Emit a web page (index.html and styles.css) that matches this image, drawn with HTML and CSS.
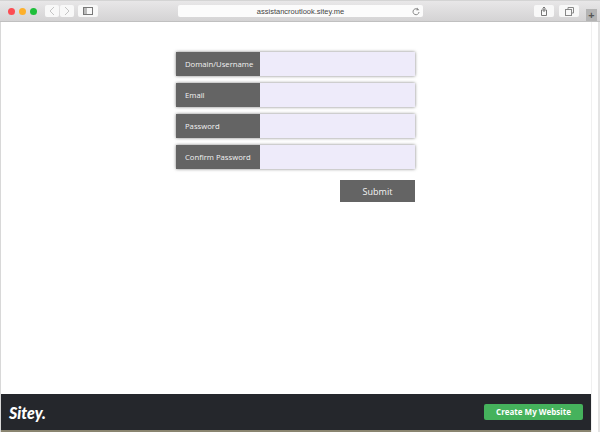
FILE: index.html
```html
<!DOCTYPE html>
<html lang="en">
<head>
    <meta charset="UTF-8">
    <meta name="viewport" content="width=device-width, initial-scale=1.0">
    <title>assistancroutlook.sitey.me</title>
    <link rel="stylesheet" href="styles.css">
</head>
<body>
    <div class="window">
        <div class="toolbar">
            <div class="lights">
                <span class="light red"></span>
                <span class="light yellow"></span>
                <span class="light green"></span>
            </div>
            <div class="nav-group">
                <span class="tool tool-nav">
                    <svg width="8" height="10" viewBox="0 0 8 10"><path d="M6 1 2 5l4 4" fill="none" stroke="#c4c4c4" stroke-width="1"/></svg>
                </span>
                <span class="tool tool-nav">
                    <svg width="8" height="10" viewBox="0 0 8 10"><path d="M2 1l4 4-4 4" fill="none" stroke="#c4c4c4" stroke-width="1"/></svg>
                </span>
            </div>
            <span class="tool tool-side">
                <svg width="10" height="8" viewBox="0 0 10 8"><rect x=".5" y=".5" width="9" height="7" fill="none" stroke="#777"/><rect x="1" y="1" width="3" height="6" fill="#bbb"/></svg>
            </span>
            <div class="address">
                <span class="url">assistancroutlook.sitey.me</span>
                <svg class="reload" width="8" height="9" viewBox="0 0 8 9"><path d="M6.600 3.200A3 3 0 1 0 7 5" fill="none" stroke="#888" stroke-width="1"/><path d="M5 .5l2 2.600-2.600.4z" fill="#888"/></svg>
            </div>
            <span class="tool tool-right">
                <svg width="8" height="10" viewBox="0 0 8 10"><path d="M1.500 4h5v5.500h-5z" fill="none" stroke="#777"/><path d="M4 6V1M2.500 2.500 4 1l1.500 1.500" fill="none" stroke="#777"/></svg>
            </span>
            <span class="tool tool-right">
                <svg width="9" height="9" viewBox="0 0 9 9"><path d="M3 2.500V.5h5.500V6H6.500" fill="none" stroke="#888"/><rect x=".5" y="2.500" width="6" height="6" fill="none" stroke="#888"/></svg>
            </span>
            <div class="new-tab">+</div>
        </div>

        <div class="viewport">
            <div class="main">
                <div class="content">
                    <form class="login-form">
                        <div class="form-group">
                            <label class="field-label" for="username">Domain/Username</label>
                            <input class="field-input" type="text" id="username">
                        </div>
                        <div class="form-group">
                            <label class="field-label" for="email">Email</label>
                            <input class="field-input" type="text" id="email">
                        </div>
                        <div class="form-group">
                            <label class="field-label" for="password">Password</label>
                            <input class="field-input" type="password" id="password">
                        </div>
                        <div class="form-group">
                            <label class="field-label" for="confirm">Confirm Password</label>
                            <input class="field-input" type="password" id="confirm">
                        </div>
                        <div class="form-actions">
                            <button class="submit" type="button">Submit</button>
                        </div>
                    </form>
                </div>
                <div class="footer">
                    <span class="logo">Sitey.</span>
                    <a class="create" href="#">Create My Website</a>
                </div>
                <div class="bottom-edge"></div>
            </div>
            <div class="scrollbar"></div>
        </div>
    </div>
</body>
</html>
```

FILE: styles.css
```css
html, body {
    margin: 0;
    padding: 0;
}
body {
    font-family: "Open Sans", Arial, sans-serif;
    background: #fff;
}
.window {
    width: 600px;
    height: 432px;
    display: flex;
    flex-direction: column;
    overflow: hidden;
}

/* browser chrome */
.toolbar {
    height: 22px;
    flex: none;
    display: flex;
    align-items: center;
    padding-left: 8px;
    background: linear-gradient(#e8e7e8, #d4d3d4);
    border-top: 1px solid #d4d4d4;
    border-bottom: 1px solid #c0c0c0;
    box-sizing: border-box;
}
.lights {
    display: flex;
    gap: 4px;
    margin-right: 8px;
}
.light {
    width: 7px;
    height: 7px;
    border-radius: 50%;
}
.red { background: #fc4c52; }
.yellow { background: #fdb02b; }
.green { background: #1ebf3a; }
.nav-group {
    display: flex;
    gap: 1px;
    margin-right: 4px;
}
.tool {
    height: 12px;
    background: #f8f8f8;
    border-radius: 2px;
    display: flex;
    align-items: center;
    justify-content: center;
}
.tool-nav { width: 14px; }
.tool-side {
    width: 20px;
    margin-right: 80px;
}
.address {
    width: 245px;
    height: 12px;
    background: #fbfbfb;
    border-radius: 2px;
    display: flex;
    align-items: center;
    justify-content: center;
    position: relative;
    margin-right: 111px;
}
.url {
    font-family: "Liberation Sans", Arial, sans-serif;
    font-size: 7.500px;
    color: #444;
}
.reload {
    position: absolute;
    right: 3px;
    top: 2px;
}
.tool-right {
    width: 20px;
    margin-right: 5px;
}
.new-tab {
    width: 11px;
    height: 12px;
    margin-left: 2px;
    background: #b4b4b4;
    color: #555;
    font-size: 11px;
    font-weight: bold;
    line-height: 12px;
    text-align: center;
    align-self: flex-end;
}

/* page */
.viewport {
    flex: 1;
    display: flex;
    min-height: 0;
}
.main {
    flex: 1;
    display: flex;
    flex-direction: column;
    min-width: 0;
    border-left: 1px solid #d8d8d8;
}
.content {
    flex: 1;
    padding: 30px 0 0 175px;
}
.scrollbar {
    width: 9px;
    flex: none;
    box-sizing: border-box;
    background: #fff;
    border-left: 1px solid #f0f0f0;
    border-right: 2px solid #e4e4e4;
}
.login-form {
    width: 239px;
}
.form-group {
    display: flex;
    height: 24px;
    margin-bottom: 7px;
    box-shadow: 0 0 3px rgba(0, 0, 0, 0.5);
}
.field-label {
    width: 84px;
    flex: none;
    box-sizing: border-box;
    padding-left: 9px;
    background: #646464;
    color: #f2f2f2;
    font-size: 7.700px;
    line-height: 24px;
}
.field-input {
    flex: 1;
    min-width: 0;
    border: 0;
    padding: 0;
    background: #eeebfa;
}
.form-actions {
    display: flex;
    justify-content: flex-end;
    padding-top: 4px;
}
.submit {
    width: 75px;
    height: 22px;
    border: 0;
    padding: 0;
    background: #646464;
    color: #f4f4f4;
    font-family: "Open Sans", Arial, sans-serif;
    font-size: 9px;
}

/* footer bar */
.footer {
    height: 36px;
    flex: none;
    display: flex;
    align-items: center;
    justify-content: space-between;
    padding: 0 8px 0 8px;
    background: #25272c;
    box-sizing: border-box;
}
.logo {
    font-family: Lato, "Open Sans", sans-serif;
    font-style: italic;
    font-weight: 900;
    font-size: 16px;
    color: #fff;
}
.create {
    width: 99px;
    height: 16px;
    background: #45b25c;
    border-radius: 2px;
    color: #fff;
    font-size: 8px;
    font-weight: 700;
    line-height: 16px;
    text-align: center;
    text-decoration: none;
}
.bottom-edge {
    height: 2px;
    flex: none;
    background: #8a8570;
}
```
